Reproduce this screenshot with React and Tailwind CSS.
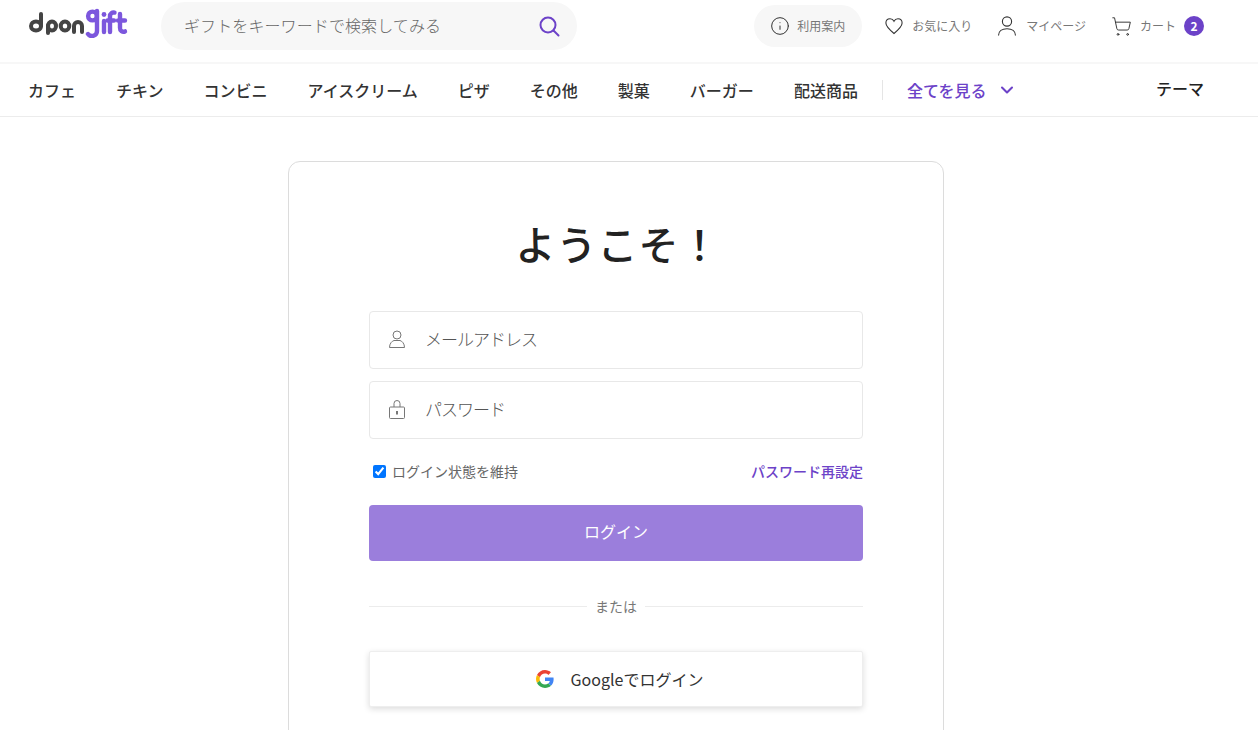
import React from "react";
import { Info, ShoppingCart, ChevronDown } from "lucide-react";

const FONT = "[font-family:'Noto_Sans_CJK_JP','Noto_Sans',sans-serif]";

function Logo() {
  return (
    <svg width="100" height="30" viewBox="0 0 100 30" fill="none" role="img" aria-label="dpongift" strokeLinecap="round">
      <g stroke="#444" strokeWidth="4">
        <ellipse cx="8" cy="18" rx="5" ry="4.500" />
        <path d="M13 18V6" />
        <ellipse cx="24" cy="18" rx="4" ry="4.500" />
        <path d="M20 18v7" />
        <ellipse cx="37" cy="18" rx="4.300" ry="4.500" />
        <path d="M46 24v-6a4 4 0 0 1 8 0v6" />
      </g>
      <g stroke="#7c57dd" strokeWidth="4.400">
        <circle cx="64.500" cy="8" r="4.400" />
        <path d="M69 3v20a5 5 0 0 1-9 3" />
        <path d="M76 13v11" />
        <path d="M82 24V8a3.500 3.500 0 0 1 4.500-3.400M79.500 12.500h6.500" />
        <path d="M92 6v14a3.500 3.500 0 0 0 5 3.400M90 12.500h7" />
      </g>
      <circle cx="76" cy="6.500" r="2.400" fill="#7c57dd" />
    </svg>
  );
}

function HeartIcon() {
  return (
    <svg width="18" height="18" viewBox="0 0 20 20" fill="none" stroke="#333" strokeWidth="1.200">
      <path d="M10 18.300C5 14.300 1 11 1 6.800 1 3.800 3.200 2 5.600 2c1.900 0 3.500 1 4.400 2.800C10.900 3 12.500 2 14.400 2 16.800 2 19 3.800 19 6.800c0 4.200-4 7.500-9 11.500z" />
    </svg>
  );
}

function UserIcon() {
  return (
    <svg width="20" height="20" viewBox="0 0 20 20" fill="none" stroke="#333" strokeWidth="1.100">
      <circle cx="10" cy="5.500" r="4.600" />
      <path d="M1.500 19.500c0-4.200 3.600-6.800 8.500-6.800s8.500 2.600 8.500 6.800" />
    </svg>
  );
}

function SmallUser() {
  return (
    <svg className="-mt-[2px]" width="16" height="18" viewBox="0 0 16 18" fill="none" stroke="#777" strokeWidth="1">
      <circle cx="8" cy="5" r="4" />
      <path d="M.5 17.500c0-4 2.500-6.500 4.500-7h6c2 .5 4.500 3 4.500 7z" />
    </svg>
  );
}

function LockIcon() {
  return (
    <svg className="-mt-[2px]" width="16" height="19" viewBox="0 0 16 19" fill="none" stroke="#777" strokeWidth="1">
      <path d="M5 7V3.500a3 3 0 0 1 6 0V7" />
      <rect x=".5" y="7" width="15" height="11.500" rx="1" />
      <rect x="7" y="11" width="2" height="3.500" fill="#777" stroke="none" />
    </svg>
  );
}

function GoogleIcon() {
  return (
    <svg width="18" height="18" viewBox="0 0 48 48">
      <path fill="#EA4335" d="M24 9.500c3.500 0 6.700 1.300 9.100 3.500l6.800-6.800C35.800 2.400 30.200 0 24 0 14.600 0 6.500 5.400 2.600 13.200l7.900 6.200C12.400 13.700 17.700 9.500 24 9.500z" />
      <path fill="#4285F4" d="M46.980 24.500c0-1.600-.2-3.100-.4-4.500H24v9h12.900c-.6 3-2.200 5.500-4.700 7.200l7.700 6c4.500-4.200 7.080-10.300 7.080-17.700z" />
      <path fill="#FBBC05" d="M10.500 28.600c-.5-1.500-.8-3-.8-4.600s.3-3.100.8-4.600l-7.900-6.200C.9 16.500 0 20.100 0 24s.9 7.500 2.600 10.800l7.900-6.200z" />
      <path fill="#34A853" d="M24 48c6.500 0 11.900-2.100 15.900-5.800l-7.700-6c-2.200 1.400-4.900 2.300-8.200 2.300-6.300 0-11.600-4.200-13.500-9.900l-7.900 6.200C6.500 42.600 14.600 48 24 48z" />
    </svg>
  );
}

const navItems = ["カフェ", "チキン", "コンビニ", "アイスクリーム", "ピザ", "その他", "製菓", "バーガー", "配送商品"];

export default function App() {
  return (
    <div className={`${FONT} h-[730px] overflow-hidden bg-white text-[#222]`}>
      <header className="flex h-[64px] items-start border-b-2 border-[#f7f7f7] pl-[28px] pr-[54px]">
        <div className="mt-[8px] w-[133px] shrink-0"><Logo /></div>
        <div className="mt-[2px] flex h-[48px] w-[416px] items-center justify-between rounded-[24px] bg-[#f7f7f7] pl-[23px] pr-[17px]">
          <span className="-mt-[3px] text-[16px] font-light tracking-[0.1px] text-[#666]">ギフトをキーワードで検索してみる</span>
          <svg width="22" height="22" viewBox="0 0 22 22" fill="none" stroke="#6c42c8" strokeWidth="2" strokeLinecap="round">
            <circle cx="10" cy="10" r="7.500" />
            <path d="M15.500 15.500l5 5" />
          </svg>
        </div>
        <div className="mt-[5px] ml-auto flex h-[42px] items-center text-[12px] text-[#777]">
          <div className="flex h-[42px] w-[108px] items-center gap-[7px] rounded-[21px] bg-[#f7f7f7] pl-[16px]">
            <Info size={20} strokeWidth={1.2} color="#333" />
            <span>利用案内</span>
          </div>
          <div className="ml-[23px] flex items-center gap-[9px]">
            <HeartIcon />
            <span>お気に入り</span>
          </div>
          <div className="ml-[25px] flex items-center gap-[9px]">
            <UserIcon />
            <span>マイページ</span>
          </div>
          <div className="ml-[25px] flex items-center gap-[8px]">
            <ShoppingCart size={21} strokeWidth={1.1} color="#333" />
            <span>カート</span>
          </div>
          <span className="ml-[8px] flex h-[20px] w-[20px] items-center justify-center rounded-full bg-[#6c42c8] text-[12px] font-bold text-white">2</span>
        </div>
      </header>

      <nav className="flex h-[53px] items-center border-b border-[#ececec] pl-[28px] pr-[54px] text-[16px] font-medium text-[#333]">
        <div className="flex items-center gap-[40px]">
          {navItems.map((n) => (
            <span key={n}>{n}</span>
          ))}
        </div>
        <span className="ml-[24px] h-[20px] w-px bg-[#e5e5e5]" />
        <span className="ml-[24px] text-[#6c42c8]">全てを見る</span>
        <ChevronDown className="ml-[10px]" size={20} strokeWidth={2.5} color="#6c42c8" />
        <span className="ml-auto -mt-[4px] text-[#222]">テーマ</span>
      </nav>

      <main className="flex justify-center pt-[44px] pr-[26px]">
        <div className="h-[900px] w-[656px] rounded-[12px] border border-[#dcdcdc] px-[80px] pt-[47px]">
          <h1 className="pl-[4px] text-center text-[40px] leading-[68px] font-medium tracking-[1px] text-[#222]">ようこそ！</h1>

          <div className="mt-[34px] flex h-[58px] items-center gap-[20px] rounded-[4px] border border-[#e8e8e8] pl-[19px] text-[#777]">
            <SmallUser />
            <span className="-mt-[3px] text-[17px] font-light tracking-[-1px] text-[#555]">メールアドレス</span>
          </div>
          <div className="mt-[12px] flex h-[58px] items-center gap-[20px] rounded-[4px] border border-[#e8e8e8] pl-[19px] text-[#777]">
            <LockIcon />
            <span className="-mt-[3px] text-[17px] font-light tracking-[-1px] text-[#555]">パスワード</span>
          </div>

          <div className="mt-[21px] flex h-[22px] items-center justify-between text-[14px]">
            <label className="flex items-center gap-[6px] pl-[4px] text-[#666]">
              <input type="checkbox" defaultChecked className="m-0 h-[13px] w-[13px]" />
              <span>ログイン状態を維持</span>
            </label>
            <span className="font-medium text-[#6c42c8]">パスワード再設定</span>
          </div>

          <button className="mt-[23px] flex h-[56px] w-full items-center justify-center rounded-[4px] bg-[#9b7edc] pb-[4px] text-[16px] text-white">ログイン</button>

          <div className="mt-[35px] flex items-center gap-[8px] text-[14px] text-[#777]">
            <span className="h-px flex-1 bg-[#ececec]" />
            <span>または</span>
            <span className="h-px flex-1 bg-[#ececec]" />
          </div>

          <button className="mt-[34px] flex h-[56px] w-full items-center justify-center gap-[17px] rounded-[2px] border border-[#eee] bg-white pl-[7px] text-[16px] text-[#333] shadow-[0_2px_6px_rgba(0,0,0,0.14)]">
            <GoogleIcon />
            <span>Googleでログイン</span>
          </button>
        </div>
      </main>
    </div>
  );
}
